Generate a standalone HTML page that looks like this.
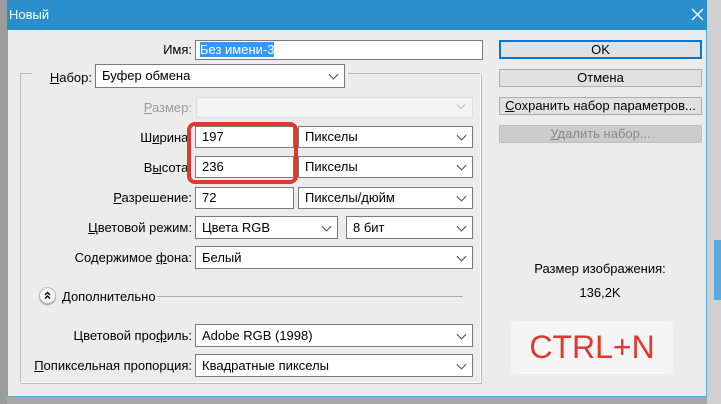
<!DOCTYPE html>
<html><head><meta charset="utf-8"><style>
*{box-sizing:border-box;margin:0;padding:0}
body{width:721px;height:404px;background:#a8a8a8;position:relative;overflow:hidden;font-family:"Liberation Sans","DejaVu Sans",sans-serif;font-size:13px;color:#000}
.a{position:absolute}
#dlg{left:7px;top:0;width:700px;height:397px;background:#ececec;border:1px solid #5aa9e0;border-top:none}
#title{left:7px;top:0;width:700px;height:30px;background:#2a8dcc;color:#fff;font-size:13px;line-height:30px;padding-left:2px}
.lbl{text-align:right;white-space:nowrap}
.in{background:#fff;border:1px solid #7a7a7a;padding-left:6px;white-space:nowrap}
.sel{background:#fff;border:1px solid #7a7a7a;padding-left:6px;white-space:nowrap}
.sel:after{content:"";position:absolute;right:7px;top:50%;width:6px;height:6px;border-right:1px solid #444;border-bottom:1px solid #444;transform:translateY(-70%) rotate(45deg)}
.btn{background:#e1e1e1;border:1px solid #adadad;text-align:center}
u{text-decoration:underline}
</style></head><body>
<div class="a" style="left:707px;top:0;width:14px;height:404px;background:#d0d0d0"></div>
<div class="a" style="left:714px;top:240px;width:7px;height:60px;background:#5aa9e0"></div>
<div class="a" style="left:0;top:0;width:7px;height:404px;background:#9b9b9b"></div>
<div class="a" id="dlg"></div>
<div class="a" id="title">Новый</div>
<svg class="a" style="left:691px;top:8px" width="13" height="13"><path d="M1 1L12 12M12 1L1 12" stroke="#fff" stroke-width="1.3"/></svg>

<div class="a lbl" style="left:100px;width:92px;top:41px;line-height:17px">Имя:</div>
<div class="a in" style="left:195px;top:40px;width:288px;height:20px;line-height:18px;padding-left:4px"><span style="background:#3399ff;color:#fff">Без имени-3</span></div>

<div class="a" style="left:20px;top:73px;width:461px;height:310px;border:1px solid #bbb;border-right-color:#fff;border-bottom-color:#fff;box-shadow:1px 1px 0 #bbb"></div>
<div class="a" style="left:32px;top:66px;width:316px;height:20px;background:#ececec"></div>
<div class="a lbl" style="left:40px;width:52px;top:69px;line-height:17px"><u>Н</u>абор:</div>
<div class="a sel" style="left:95px;top:64px;width:250px;height:24px;line-height:22px">Буфер обмена</div>

<div class="a lbl" style="left:100px;width:92px;top:99px;color:#999;line-height:17px"><u>Р</u>азмер:</div>
<div class="a" style="left:196px;top:97px;width:277px;height:21px;background:#f3f3f3;border:1px solid #ddd"></div>
<div class="a" style="left:458px;top:102px;width:6px;height:6px;border-right:1px solid #bbb;border-bottom:1px solid #bbb;transform:rotate(45deg)"></div>

<div class="a lbl" style="left:100px;width:92px;top:129px;line-height:17px">Ш<u>и</u>рина:</div>
<div class="a in" style="left:195px;top:126px;width:99px;height:22px;line-height:20px">197</div>
<div class="a sel" style="left:298px;top:126px;width:175px;height:22px;line-height:20px">Пикселы</div>
<div class="a lbl" style="left:100px;width:92px;top:159px;line-height:17px">В<u>ы</u>сота:</div>
<div class="a in" style="left:195px;top:156px;width:99px;height:22px;line-height:20px">236</div>
<div class="a sel" style="left:298px;top:156px;width:175px;height:22px;line-height:20px">Пикселы</div>
<div class="a" style="left:187px;top:122px;width:111px;height:62px;border:4px solid #e0382e;border-radius:8px"></div>

<div class="a lbl" style="left:60px;width:132px;top:189px;line-height:17px"><u>Р</u>азрешение:</div>
<div class="a in" style="left:195px;top:187px;width:99px;height:22px;line-height:20px">72</div>
<div class="a sel" style="left:298px;top:187px;width:175px;height:22px;line-height:20px">Пикселы/дюйм</div>

<div class="a lbl" style="left:30px;width:162px;top:219px;line-height:17px"><u>Ц</u>ветовой режим:</div>
<div class="a sel" style="left:195px;top:216px;width:143px;height:23px;line-height:21px">Цвета RGB</div>
<div class="a sel" style="left:346px;top:216px;width:127px;height:23px;line-height:21px">8 бит</div>

<div class="a lbl" style="left:30px;width:162px;top:249px;line-height:17px">Содержимое <u>ф</u>она:</div>
<div class="a sel" style="left:195px;top:246px;width:278px;height:23px;line-height:21px">Белый</div>

<div class="a" style="left:39px;top:287px;width:17px;height:17px;border-radius:50%;background:#f8f8f8;border:1px solid #bbb;box-shadow:0 1px 1px #999"></div>
<svg class="a" style="left:42px;top:290px" width="11" height="11"><path d="M3 5L5.5 2.5L8 5M3 8.5L5.5 6L8 8.5" stroke="#000" stroke-width="1.4" fill="none"/></svg>
<div class="a" style="left:62px;top:288px;line-height:17px">Дополнительно</div>
<div class="a" style="left:157px;top:296px;width:306px;height:1px;background:#aaa"></div>

<div class="a lbl" style="left:30px;width:162px;top:327px;line-height:17px">Цветовой про<u>ф</u>иль:</div>
<div class="a sel" style="left:195px;top:324px;width:278px;height:23px;line-height:21px">Adobe RGB (1998)</div>
<div class="a lbl" style="left:10px;width:182px;top:357px;line-height:17px"><u>П</u>опиксельная пропорция:</div>
<div class="a sel" style="left:195px;top:354px;width:278px;height:23px;line-height:21px">Квадратные пикселы</div>

<div class="a btn" style="left:499px;top:40px;width:203px;height:19px;line-height:15px;border:2px solid #0078d7">OK</div>
<div class="a btn" style="left:499px;top:69px;width:203px;height:18px;line-height:16px">Отмена</div>
<div class="a btn" style="left:499px;top:97px;width:203px;height:18px;line-height:16px"><u>С</u>охранить набор параметров...</div>
<div class="a btn" style="left:499px;top:125px;width:203px;height:18px;line-height:16px;background:#ccc;border-color:#bfbfbf;color:#888"><u>У</u>далить набор...</div>

<div class="a" style="left:500px;width:200px;top:261px;text-align:center;line-height:15px">Размер изображения:</div>
<div class="a" style="left:500px;width:200px;top:285px;text-align:center;line-height:15px">136,2K</div>
<div class="a" style="left:511px;top:321px;width:162px;height:53px;background:#f5f5f5;border-radius:3px;color:#e0382e;font-size:32px;line-height:53px;text-align:center">CTRL+N</div>
</body></html>
